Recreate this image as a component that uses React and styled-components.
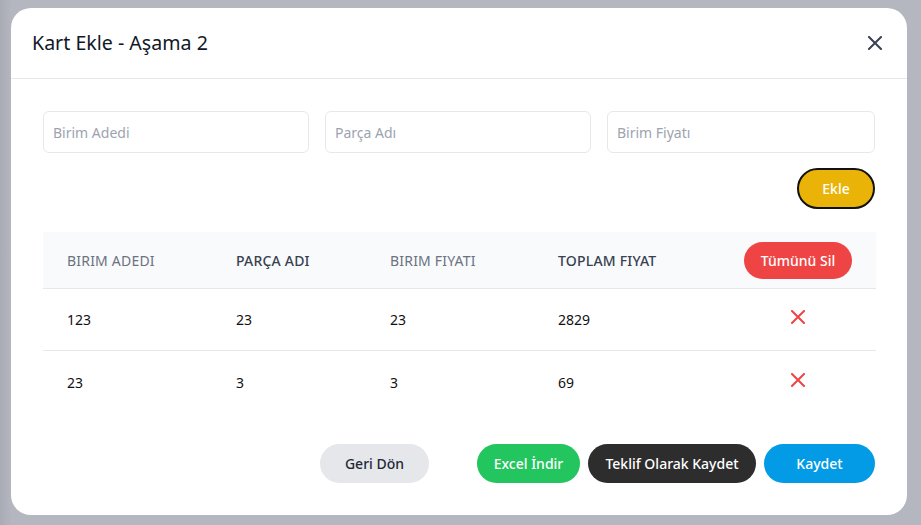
import React from "react";
import styled, { createGlobalStyle } from "styled-components";

const Global = createGlobalStyle`
  html, body { margin: 0; padding: 0; }
  body {
    width: 921px; height: 525px; overflow: hidden;
    background: #b3b6be;
    font-family: "Noto Sans", "Open Sans", sans-serif;
  }
  * { box-sizing: border-box; }
`;

const Backdrop = styled.div`
  width: 921px;
  height: 525px;
  padding: 8px 14px 10px 11px;
  background: linear-gradient(90deg, #a9acb4 0px, #b4b7bf 12px, #b4b7bf 100%);
`;

const Modal = styled.div`
  width: 896px;
  height: 507px;
  background: #fff;
  border-radius: 20px;
  display: flex;
  flex-direction: column;
  overflow: hidden;
`;

const Header = styled.div`
  height: 71px;
  border-bottom: 1px solid #e5e7eb;
  display: flex;
  align-items: center;
  justify-content: space-between;
  padding: 0 25px 0 21px;
`;

const Title = styled.h2`
  margin: 0;
  font-size: 19.6px;
  font-weight: 400;
  color: #111827;
  padding-bottom: 2px;
`;

const CloseBtn = styled.button`
  border: 0;
  background: none;
  padding: 0;
  width: 14px;
  height: 14px;
  display: flex;
  color: #374151;
  margin-top: -1px;
`;

const Body = styled.div`
  flex: 1;
  padding: 32px 32px 32px 32px;
  display: flex;
  flex-direction: column;
`;

const InputRow = styled.div`
  display: grid;
  grid-template-columns: 266px 266px 1fr;
  gap: 16px;
`;

const Input = styled.input`
  height: 42px;
  border: 1px solid #e5e7eb;
  border-radius: 6px;
  padding: 0 9px;
  font-family: inherit;
  font-size: 14px;
  color: #111827;
  outline: none;
  &::placeholder { color: #9ca3af; }
`;

const AddRow = styled.div`
  display: flex;
  justify-content: flex-end;
  margin-top: 15px;
`;

const Pill = styled.button`
  height: ${(p) => p.$h || 39}px;
  width: ${(p) => p.$w}px;
  border-radius: 999px;
  border: ${(p) => (p.$border ? "2px solid #111" : "0")};
  background: ${(p) => p.$bg};
  color: ${(p) => p.$color || "#fff"};
  font-family: inherit;
  font-size: 14px;
  font-weight: 500;
  display: flex;
  align-items: center;
  justify-content: center;
  padding: 0;
  cursor: pointer;
`;

const Table = styled.div`
  margin-top: 23px;
  display: grid;
  grid-template-columns: 169px 154px 168px 186px 1fr;
`;

const HeadCell = styled.div`
  height: 57px;
  background: #f9fafb;
  border-bottom: 1px solid #e5e7eb;
  display: flex;
  align-items: center;
  justify-content: ${(p) => (p.$center ? "center" : "flex-start")};
  padding: 0 24px;
  font-size: 14px;
  font-weight: ${(p) => (p.$dark ? 500 : 400)};
  text-transform: uppercase;
  letter-spacing: 0.2px;
  color: ${(p) => (p.$dark ? "#374151" : "#6b7280")};
`;

const Cell = styled.div`
  height: 62px;
  border-bottom: ${(p) => (p.$last ? "0" : "1px solid #e5e7eb")};
  display: flex;
  align-items: center;
  justify-content: ${(p) => (p.$center ? "center" : "flex-start")};
  padding: 0 24px;
  font-size: 14px;
  color: #111;
`;

const DelBtn = styled.button`
  border: 0;
  background: none;
  padding: 0;
  color: #ef4444;
  display: flex;
  margin-top: -5px;
`;

const Footer = styled.div`
  margin-top: auto;
  display: flex;
  justify-content: flex-end;
  align-items: center;
  gap: 8px;
`;

const Spacer = styled.div`
  width: 32px;
`;

const XIcon = ({ size = 14, w = 2 }) => (
  <svg width={size} height={size} viewBox="0 0 14 14" fill="none">
    <path d="M1 1L13 13M13 1L1 13" stroke="currentColor" strokeWidth={w} strokeLinecap="square" />
  </svg>
);

const rows = [
  ["123", "23", "23", "2829"],
  ["23", "3", "3", "69"],
];

export default function App() {
  return (
    <>
      <Global />
      <Backdrop>
        <Modal>
          <Header>
            <Title>Kart Ekle - Aşama 2</Title>
            <CloseBtn aria-label="Kapat">
              <XIcon size={14} w={2} />
            </CloseBtn>
          </Header>
          <Body>
            <InputRow>
              <Input placeholder="Birim Adedi" />
              <Input placeholder="Parça Adı" />
              <Input placeholder="Birim Fiyatı" />
            </InputRow>
            <AddRow>
              <Pill $w={78} $h={41} $bg="#eab308" $border>Ekle</Pill>
            </AddRow>
            <Table>
              <HeadCell>Bırım Adedı</HeadCell>
              <HeadCell $dark>Parça Adı</HeadCell>
              <HeadCell>Bırım Fıyatı</HeadCell>
              <HeadCell $dark>Toplam Fıyat</HeadCell>
              <HeadCell $center>
                <Pill $w={108} $h={37} $bg="#ef4444">Tümünü Sil</Pill>
              </HeadCell>
              {rows.map((r, i) => (
                <React.Fragment key={i}>
                  {r.map((v, j) => (
                    <Cell key={j} $last={i === rows.length - 1}>{v}</Cell>
                  ))}
                  <Cell $center $last={i === rows.length - 1}>
                    <DelBtn aria-label="Sil">
                      <XIcon size={14} w={2} />
                    </DelBtn>
                  </Cell>
                </React.Fragment>
              ))}
            </Table>
            <Footer>
              <Pill $w={109} $bg="#e5e7eb" $color="#1f2937">Geri Dön</Pill>
              <Spacer />
              <Pill $w={103} $bg="#22c55e">Excel İndir</Pill>
              <Pill $w={168} $bg="#2d2d2d">Teklif Olarak Kaydet</Pill>
              <Pill $w={111} $bg="#039be5">Kaydet</Pill>
            </Footer>
          </Body>
        </Modal>
      </Backdrop>
    </>
  );
}
